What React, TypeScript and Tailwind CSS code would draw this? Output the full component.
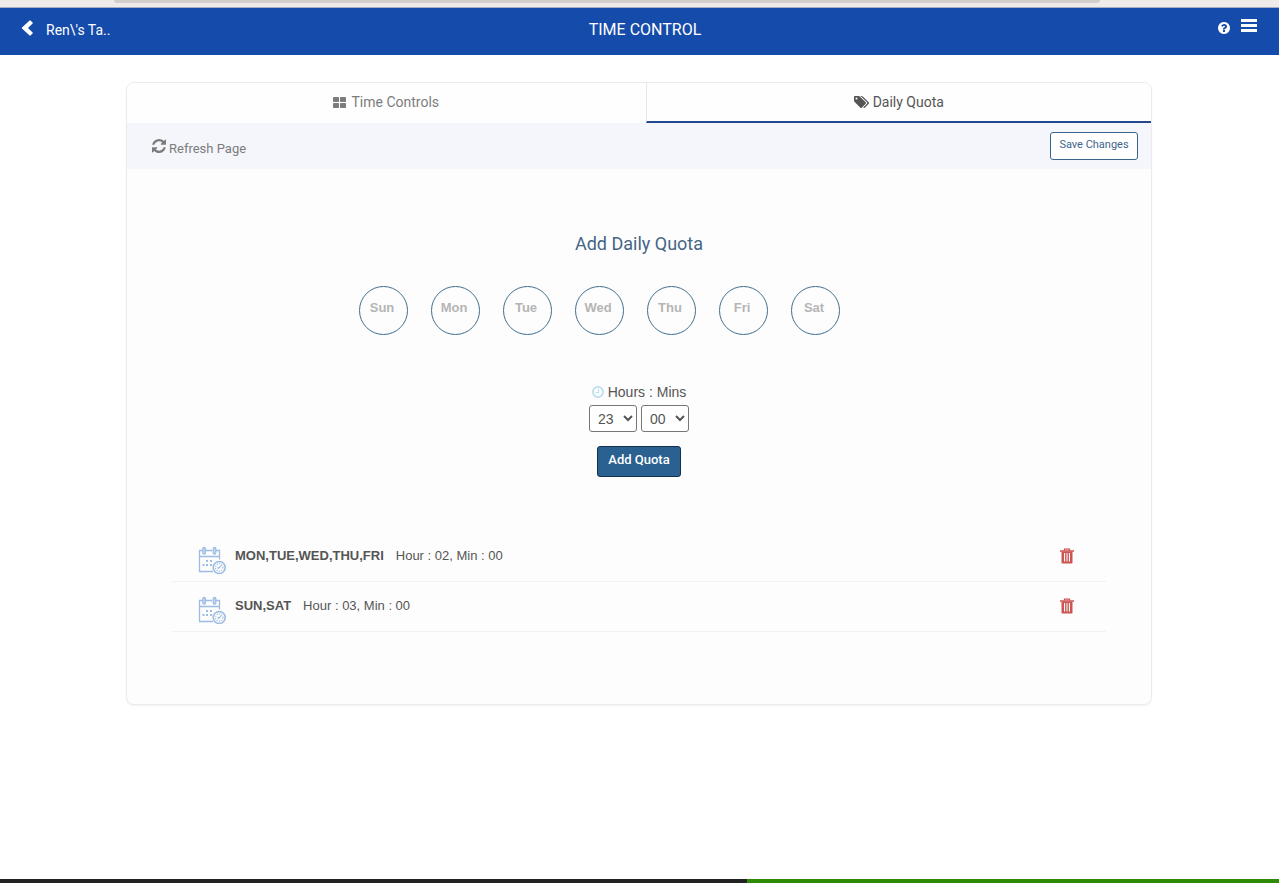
import React, { useState } from 'react';

interface Quota {
  id: number;
  days: string;
  hour: string;
  min: string;
}

interface IconProps {
  className?: string;
}

const DAYS = ['Sun', 'Mon', 'Tue', 'Wed', 'Thu', 'Fri', 'Sat'];

const HOURS = Array.from({ length: 24 }, (_, i) => String(i).padStart(2, '0'));
const MINS = ['00', '15', '30', '45'];

const INITIAL_QUOTAS: Quota[] = [
  { id: 1, days: 'MON,TUE,WED,THU,FRI', hour: '02', min: '00' },
  { id: 2, days: 'SUN,SAT', hour: '03', min: '00' },
];

const ChevronLeftIcon: React.FC<IconProps> = ({ className }) => (
  <svg className={className} viewBox="0 0 12 16" fill="currentColor" aria-hidden="true">
    <path d="M8.6.4Q9 0 9.4.4l2.2 2.2q.4.4 0 .8L7 8l4.6 4.6q.4.4 0 .8l-2.2 2.2q-.4.4-.8 0L1 8.4q-.4-.4 0-.8z" />
  </svg>
);

const QuestionIcon: React.FC<IconProps> = ({ className }) => (
  <svg className={className} viewBox="128 128 1536 1536" fill="currentColor" aria-hidden="true">
    <path d="M1024 1376v-192q0-14-9-23t-23-9h-192q-14 0-23 9t-9 23v192q0 14 9 23t23 9h192q14 0 23-9t9-23zm256-672q0-88-55.5-163t-138.5-116-170-41q-243 0-371 213-15 24 8 42l132 100q7 6 19 6 16 0 25-12 53-68 86-92 34-24 86-24 48 0 85.5 26t37.5 59q0 38-20 61t-68 45q-63 28-115.5 86.5t-52.5 125.5v36q0 14 9 23t23 9h192q14 0 23-9t9-23q0-19 21.5-49.5t54.5-49.5q32-18 49-28.5t46-35 44.5-48 28-60.5 12.5-81zm384 192q0 209-103 385.5t-279.5 279.5-385.5 103-385.5-103-279.5-279.5-103-385.5 103-385.5 279.5-279.5 385.5-103 385.5 103 279.5 279.5 103 385.5z" />
  </svg>
);

const MenuIcon: React.FC<IconProps> = ({ className }) => (
  <svg className={className} viewBox="0 0 16 13" fill="currentColor" aria-hidden="true">
    <path d="M0 0h16v3H0zM0 5h16v3H0zM0 10h16v3H0z" />
  </svg>
);

const ThLargeIcon: React.FC<IconProps> = ({ className }) => (
  <svg className={className} viewBox="0 0 14 11" fill="currentColor" aria-hidden="true">
    <rect width="6" height="5" rx=".8" />
    <rect x="7" width="6" height="5" rx=".8" />
    <rect y="6" width="6" height="5" rx=".8" />
    <rect x="7" y="6" width="6" height="5" rx=".8" />
  </svg>
);

const TagsIcon: React.FC<IconProps> = ({ className }) => (
  <svg className={className} viewBox="128 128 1900 1516" fill="currentColor" aria-hidden="true">
    <path d="M576 448q0-53-37.5-90.5t-90.5-37.5-90.5 37.5-37.5 90.5 37.5 90.5 90.5 37.5 90.5-37.5 37.5-90.5zm1067 576q0 53-37 90l-491 492q-39 37-91 37-53 0-90-37l-715-716q-38-37-64.5-101t-26.5-117v-416q0-52 38-90t90-38h416q53 0 117 26.5t102 64.5l715 714q37 39 37 91zm384 0q0 53-37 90l-491 492q-39 37-91 37-36 0-59-14t-53-45l470-470q37-37 37-90 0-52-37-91l-715-714q-38-38-102-64.5t-117-26.5h224q53 0 117 26.5t102 64.5l715 714q37 39 37 91z" />
  </svg>
);

const RefreshIcon: React.FC<IconProps> = ({ className }) => (
  <svg className={className} viewBox="128 128 1536 1536" fill="currentColor" aria-hidden="true">
    <path d="M1639 1056q0 5-1 7-64 268-268 434.5t-478 166.5q-146 0-282.5-55t-243.5-157l-129 129q-19 19-45 19t-45-19-19-45v-448q0-26 19-45t45-19h448q26 0 45 19t19 45-19 45l-137 137q71 66 161 102t187 36q134 0 250-65t186-179q11-17 53-117 8-23 30-23h192q13 0 22.5 9.5t9.5 22.5zm25-800v448q0 26-19 45t-45 19h-448q-26 0-45-19t-19-45 19-45l138-138q-148-137-349-137-134 0-250 65t-186 179q-11 17-53 117-8 23-30 23h-199q-13 0-22.5-9.5t-9.5-22.5v-7q65-268 270-434.5t480-166.5q146 0 284 55.5t245 156.5l130-129q19-19 45-19t45 19 19 45z" />
  </svg>
);

const ClockIcon: React.FC<IconProps> = ({ className }) => (
  <svg className={className} viewBox="0 0 12 12" fill="none" stroke="currentColor" aria-hidden="true">
    <circle cx="6" cy="6" r="5.1" strokeWidth="1.7" />
    <path d="M6.5 3v3.5H3.5" strokeWidth="1.1" />
  </svg>
);

const TrashIcon: React.FC<IconProps> = ({ className }) => (
  <svg className={className} viewBox="0 0 14 16" fill="none" aria-hidden="true">
    <path d="M4.5 2.5V1.2h5v1.3" stroke="currentColor" strokeWidth="1.2" />
    <path d="M0 2.2h14v1.6H0z" fill="currentColor" />
    <path
      fillRule="evenodd"
      d="M1.5 3.6h11v10.9q0 1-1 1h-9q-1 0-1-1zM4 5v8.6h1.1V5zM6.5 5v8.6h1V5zM8.9 5v8.6H10V5z"
      fill="currentColor"
    />
  </svg>
);

const CalendarIcon: React.FC<IconProps> = ({ className }) => (
  <svg className={className} viewBox="0 0 28 28" fill="none" stroke="#9dbbe3" aria-hidden="true">
    <path d="M4 4.5H1.5v21H15M8 4.5h6M18 4.5h3.5v9M1.5 10.5h20" strokeWidth="1.3" />
    <rect x="4.8" y="1.5" width="2.6" height="6.5" rx="1.3" strokeWidth="1.3" fill="#c9daf1" />
    <rect x="15.2" y="1.5" width="2.6" height="6.5" rx="1.3" strokeWidth="1.3" fill="#c9daf1" />
    <path d="M8 15h2M12 15h2M4.5 19h2M8 19h2M12 19h2" strokeWidth="2" />
    <circle cx="21.2" cy="21.5" r="6" strokeWidth="1.6" fill="#fdfdfd" />
    <circle cx="21.2" cy="21.5" r="3.7" strokeWidth="1.1" strokeDasharray="1.2 1.2" />
    <path d="M20.4 22.6l3-3.2M19.6 21.2l1.2 1.4" strokeWidth="1.2" />
  </svg>
);

const App: React.FC = () => {
  const [selectedDays, setSelectedDays] = useState<string[]>([]);
  const [hour, setHour] = useState('23');
  const [min, setMin] = useState('00');
  const [quotas, setQuotas] = useState<Quota[]>(INITIAL_QUOTAS);

  const toggleDay = (day: string) => {
    setSelectedDays(prev => (prev.includes(day) ? prev.filter(d => d !== day) : [...prev, day]));
  };

  const addQuota = () => {
    if (selectedDays.length === 0) return;
    const days = DAYS.filter(d => selectedDays.includes(d)).join(',').toUpperCase();
    setQuotas(prev => [...prev, { id: Date.now(), days, hour, min }]);
    setSelectedDays([]);
  };

  const removeQuota = (id: number) => {
    setQuotas(prev => prev.filter(q => q.id !== id));
  };

  return (
    <div className="min-h-screen flex flex-col bg-white font-['Roboto',sans-serif] text-sm text-[#555]">
      {/* Window edge */}
      <div className="h-2 bg-[#efebe9] border-b border-[#a9adc0] pl-[114px] pr-[179px]">
        <div className="h-[3px] bg-[#d2cecb] rounded-b-lg" />
      </div>

      {/* Header */}
      <header className="h-[47px] bg-[#154baa] text-white grid grid-cols-3 items-start pl-[21px] pr-[22px]">
        <a href="#back" className="flex items-start gap-[13px] pt-3">
          <ChevronLeftIcon className="w-3 h-4" />
          <span className="leading-5">Ren\'s Ta..</span>
        </a>
        <h1 className="text-base leading-6 text-center pt-[10px] pl-3">TIME CONTROL</h1>
        <div className="flex justify-end gap-[11px] pt-[11px]">
          <button type="button" aria-label="Help" className="pt-[3px]">
            <QuestionIcon className="w-3 h-3" />
          </button>
          <button type="button" aria-label="Menu" className="self-start">
            <MenuIcon className="w-4 h-[13px]" />
          </button>
        </div>
      </header>

      <main className="pl-[126px] pr-[127px] pt-[27px] pb-10">
        <section className="bg-[#fdfdfd] border border-[#ebebeb] rounded-lg overflow-hidden shadow-xs pb-[72px]">
          {/* Tabs */}
          <nav className="flex h-10 bg-[#fefefe]">
            <a href="#controls" className="flex flex-[519] items-center justify-center gap-1 pb-0.5 text-[#7c7c7c]">
              <ThLargeIcon className="w-[14px] h-[11px]" />
              Time Controls
            </a>
            <a href="#quota" aria-current="page" className="flex flex-[505] items-center justify-center gap-1 border-l border-l-[#e8e8e8] border-b-2 border-b-[#24468a] text-[#555]">
              <TagsIcon className="w-[15px] h-3" />
              Daily Quota
            </a>
          </nav>

          {/* Toolbar */}
          <div className="flex items-center justify-between h-[46px] bg-[#f5f6fb] pl-[25px] pr-[13px]">
            <button type="button" className="flex items-start gap-[3px] pt-[5px] text-[13px] leading-5 text-[#7c7c7c]">
              <RefreshIcon className="w-[14px] h-[14px]" />
              Refresh Page
            </button>
            <button type="button" className="h-7 w-[88px] pb-0.5 bg-white border border-[#3a6488] rounded-[3px] text-[11px] text-[#41658e]">
              Save Changes
            </button>
          </div>

          {/* Quota form */}
          <div className="flex flex-col items-center pt-[63px]">
            <h2 className="text-lg leading-6 text-[#456585]">Add Daily Quota</h2>

            <div className="flex gap-[23px] mt-[30px] pr-20">
              {DAYS.map(day => (
                <button
                  key={day}
                  type="button"
                  aria-pressed={selectedDays.includes(day)}
                  onClick={() => toggleDay(day)}
                  className="w-[49px] h-[49px] rounded-full border border-[#41708f] pb-1 pr-0.5 font-['Liberation_Sans',sans-serif] text-[13px] font-bold text-[#b5b5b5] aria-pressed:bg-[#2a6496] aria-pressed:text-white"
                >
                  {day}
                </button>
              ))}
            </div>

            <div className="flex items-center gap-1 mt-[47px] font-['Liberation_Sans',sans-serif] leading-5">
              <ClockIcon className="w-3 h-3 text-[#bcdcf0]" />
              Hours : Mins
            </div>
            <div className="flex gap-1 mt-[3px] font-['Liberation_Sans',sans-serif] text-sm">
              <select aria-label="Hours" value={hour} onChange={e => setHour(e.target.value)} className="w-12 h-[27px] pl-1 bg-white border border-[#767676] rounded-[3px]">
                {HOURS.map(h => (
                  <option key={h}>{h}</option>
                ))}
              </select>
              <select aria-label="Minutes" value={min} onChange={e => setMin(e.target.value)} className="w-12 h-[27px] pl-1 bg-white border border-[#767676] rounded-[3px]">
                {MINS.map(m => (
                  <option key={m}>{m}</option>
                ))}
              </select>
            </div>
            <button type="button" onClick={addQuota} className="h-[31px] w-[84px] mt-[14px] pb-[3px] bg-[#2a6191] border border-[#14304a] rounded-[3px] text-[13px] font-medium text-white">
              Add Quota
            </button>
          </div>

          {/* Saved quotas */}
          <ul className="mt-[55px] mx-[45px] font-['Liberation_Sans',sans-serif] text-[13px] leading-5">
            {quotas.map(quota => (
              <li key={quota.id} className="flex items-start h-[50px] pt-[14px] pl-[26px] pr-8 border-b border-[#f3f2ee]">
                <CalendarIcon className="w-7 h-7 mr-[9px]" />
                <strong className="mr-3">{quota.days}</strong>
                <span>Hour : {quota.hour}, Min : {quota.min}</span>
                <button type="button" aria-label={`Delete ${quota.days}`} onClick={() => removeQuota(quota.id)} className="ml-auto pt-0.5 text-[#cd5551]">
                  <TrashIcon className="w-[14px] h-4" />
                </button>
              </li>
            ))}
          </ul>
        </section>
      </main>

      <div className="flex h-1 mt-auto bg-[#222]">
        <div className="ml-auto w-[41.6%] bg-[#2f8a06]" />
      </div>
    </div>
  );
};

export default App;
